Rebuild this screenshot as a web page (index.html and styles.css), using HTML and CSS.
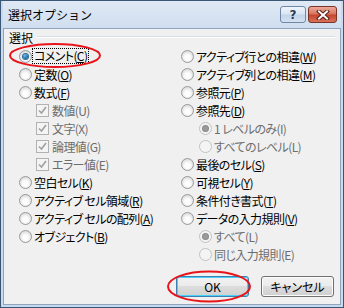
FILE: index.html
```html
<!DOCTYPE html>
<html lang="ja">
<head>
    <meta charset="UTF-8">
    <title>選択オプション</title>
    <link rel="stylesheet" href="styles.css">
</head>
<body>

    <div class="window">
        <div class="titlebar">
            <span class="title">選択オプション</span>
            <div class="caption-btns">
                <div class="cap help">?</div>
                <div class="cap close">
                    <svg width="14" height="10" viewBox="0 0 14 10">
                        <path d="M3 1.5 L11 8.5 M11 1.5 L3 8.5" stroke="#5a1e14" stroke-width="4" stroke-linecap="square"/>
                        <path d="M3 1.5 L11 8.5 M11 1.5 L3 8.5" stroke="#fff" stroke-width="2" stroke-linecap="square"/>
                    </svg>
                </div>
            </div>
        </div>

        <div class="client">
            <div class="group-head">
                <span>選択</span>
                <div class="group-line"></div>
            </div>

            <div class="columns">
                <div class="col">
                    <div class="row"><span class="radio checked"></span><span class="focus">コメント(<u>C</u>)</span></div>
                    <div class="row"><span class="radio"></span>定数(<u>O</u>)</div>
                    <div class="row"><span class="radio"></span>数式(<u>F</u>)</div>
                    <div class="row check-row off"><span class="check"></span>数値(U)</div>
                    <div class="row check-row off"><span class="check"></span>文字(X)</div>
                    <div class="row check-row off"><span class="check"></span>論理値(G)</div>
                    <div class="row check-row off"><span class="check"></span>エラー値(E)</div>
                    <div class="row"><span class="radio"></span>空白セル(<u>K</u>)</div>
                    <div class="row"><span class="radio"></span>アクティブ セル領域(<u>R</u>)</div>
                    <div class="row"><span class="radio"></span>アクティブ セルの配列(<u>A</u>)</div>
                    <div class="row"><span class="radio"></span>オブジェクト(<u>B</u>)</div>
                </div>
                <div class="col">
                    <div class="row"><span class="radio"></span>アクティブ行との相違(<u>W</u>)</div>
                    <div class="row"><span class="radio"></span>アクティブ列との相違(<u>M</u>)</div>
                    <div class="row"><span class="radio"></span>参照元(<u>P</u>)</div>
                    <div class="row"><span class="radio"></span>参照先(<u>D</u>)</div>
                    <div class="row sub off"><span class="radio checked"></span>1 レベルのみ(I)</div>
                    <div class="row sub off"><span class="radio"></span>すべてのレベル(L)</div>
                    <div class="row"><span class="radio"></span>最後のセル(<u>S</u>)</div>
                    <div class="row"><span class="radio"></span>可視セル(<u>Y</u>)</div>
                    <div class="row"><span class="radio"></span>条件付き書式(<u>T</u>)</div>
                    <div class="row"><span class="radio"></span>データの入力規則(<u>V</u>)</div>
                    <div class="row sub off"><span class="radio checked"></span>すべて(L)</div>
                    <div class="row sub off"><span class="radio"></span>同じ入力規則(E)</div>
                </div>
            </div>

            <div class="buttons">
                <button class="btn default">OK</button>
                <button class="btn">キャンセル</button>
            </div>
        </div>
    </div>

    <!-- red marks drawn over the screenshot -->
    <svg class="marks" width="344" height="308">
        <ellipse cx="55" cy="55.5" rx="45" ry="11.5" fill="none" stroke="#e8141a" stroke-width="2"/>
        <ellipse cx="209" cy="286.5" rx="41" ry="15" fill="none" stroke="#e8141a" stroke-width="2"/>
    </svg>

</body>
</html>
```

FILE: styles.css
```css
body {
    margin: 0;
    font-family: "Noto Sans CJK JP", sans-serif;
    font-size: 12px;
    color: #000;
    position: relative;
}

.window {
    width: 344px;
    height: 308px;
    box-sizing: border-box;
    border: 1px solid #3a5675;
    background: #c9daee;
    padding: 0 2px 2px;
    display: flex;
    flex-direction: column;
}

.titlebar {
    height: 27px;
    flex: none;
    display: flex;
    justify-content: space-between;
    align-items: flex-start;
    padding: 0 4px 0 5px;
    background: linear-gradient(#dfe9f5, #d0deef);
}
.title {
    line-height: 27px;
}
.caption-btns {
    display: flex;
    gap: 2px;
    margin-top: 5px;
}
.cap {
    height: 17px;
    box-sizing: border-box;
    border-radius: 3px;
    display: flex;
    align-items: center;
    justify-content: center;
}
.help {
    width: 26px;
    border: 1px solid #6f88a6;
    background: linear-gradient(#eef4fb, #dbe6f3 45%, #c3d5ea 55%, #d4e2f1);
    font-family: "DejaVu Sans", sans-serif;
    font-weight: bold;
    font-size: 12px;
    color: #243a55;
    text-shadow: 0 0 1px #fff;
}
.close {
    width: 29px;
    border: 1px solid #7a3326;
    background: linear-gradient(#ecaa9c, #d9775f 45%, #c7452d 55%, #d8715a);
}

.client {
    flex: 1;
    background: #f0f0f0;
    border: 1px solid #8fa5bd;
}

.group-head {
    height: 16px;
    display: flex;
    align-items: center;
    gap: 4px;
    margin: 0 5px;
}
.group-line {
    flex: 1;
    border-top: 1px solid #d5dfe5;
    border-bottom: 1px solid #fff;
}

.columns {
    display: grid;
    grid-template-columns: 162px 1fr;
    padding-left: 15px;
    margin-top: 2px;
    font-feature-settings: "palt";
    letter-spacing: -0.6px;
}
.row {
    height: 18px;
    display: flex;
    align-items: center;
    white-space: nowrap;
}
.row u {
    text-underline-offset: 1px;
}
.sub {
    padding-left: 18px;
}
.check-row {
    padding-left: 17px;
}
.off {
    color: #6d6d6d;
}

.radio {
    width: 13px;
    height: 13px;
    box-sizing: border-box;
    border-radius: 50%;
    border: 1px solid #979a9d;
    background: radial-gradient(circle at 50% 60%, #fdfdfd 30%, #d8d8d8 80%);
    margin-right: 2px;
    flex: none;
    display: flex;
    align-items: center;
    justify-content: center;
}
.radio.checked::after {
    content: "";
    width: 5px;
    height: 5px;
    border-radius: 50%;
    background: radial-gradient(circle at 40% 35%, #6ec1f0, #1a5d92 70%);
    box-shadow: 0 0 0 1px #2c6a9c;
}
.off .radio {
    border-color: #c0c2c4;
    background: #f4f4f4;
}
.off .radio.checked::after {
    background: #9a9a9a;
    box-shadow: 0 0 0 1px #8a8a8a;
}

.check {
    width: 13px;
    height: 13px;
    box-sizing: border-box;
    border: 1px solid #b1b1b1;
    background: #f4f4f4 url("data:image/svg+xml,%3Csvg xmlns='http://www.w3.org/2000/svg' width='11' height='11'%3E%3Cpath d='M2 5.5 L4.5 8 L9 2' fill='none' stroke='%23a0a0a0' stroke-width='1.6'/%3E%3C/svg%3E") no-repeat center;
    margin-right: 3px;
    flex: none;
}

.focus {
    outline: 1px dotted #000;
    padding: 0 1px;
    margin-left: -1px;
    line-height: 14px;
}

.buttons {
    display: flex;
    justify-content: flex-end;
    gap: 12px;
    margin-top: 13px;
    padding-right: 6px;
}
.btn {
    width: 73px;
    height: 21px;
    box-sizing: border-box;
    border: 1px solid #707070;
    border-radius: 3px;
    background: linear-gradient(#f2f2f2, #ebebeb 50%, #dddddd 50%, #cfcfcf);
    box-shadow: inset 0 0 0 1px #fcfcfc;
    font-family: "Noto Sans CJK JP", sans-serif;
    font-size: 12px;
    color: #000;
    padding: 0;
    font-feature-settings: "palt";
}
.btn.default {
    border-color: #3c7fb1;
    box-shadow: inset 0 0 0 1px #48d1f8;
}

.marks {
    position: absolute;
    left: 0;
    top: 0;
    pointer-events: none;
}
```
